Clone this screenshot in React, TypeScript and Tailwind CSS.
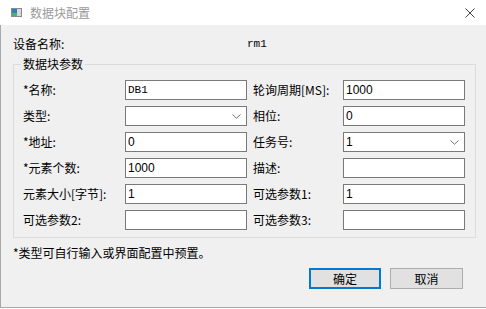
import React from "react";

const cjk = "font-['Noto_Sans_CJK_SC','Microsoft_YaHei',sans-serif]";

function Chevron() {
  return (
    <svg width="9" height="5" viewBox="0 0 9 5" className="shrink-0">
      <path d="M0.5 0.5 L4.5 4.2 L8.5 0.5" fill="none" stroke="#707070" strokeWidth="1" />
    </svg>
  );
}

function Field({ value, select, mono }: { value?: string; select?: boolean; mono?: boolean }) {
  return (
    <div className="w-[122px] h-[20px] bg-white border border-[#7a7a7a] flex items-center pl-[2px] pr-[5px]">
      <span
        className={
          mono
            ? "flex-1 font-['Liberation_Mono',monospace] text-[11px] leading-none"
            : "flex-1 font-['Liberation_Sans',Arial,sans-serif] text-[12px] leading-none"
        }
      >
        {value}
      </span>
      {select && <Chevron />}
    </div>
  );
}

type Cell = { label: string; value?: string; select?: boolean; mono?: boolean };

const rows: [Cell, Cell][] = [
  [
    { label: "*名称:", value: "DB1", mono: true },
    { label: "轮询周期[MS]:", value: "1000" },
  ],
  [
    { label: "类型:", select: true },
    { label: "相位:", value: "0" },
  ],
  [
    { label: "*地址:", value: "0" },
    { label: "任务号:", value: "1", select: true },
  ],
  [
    { label: "*元素个数:", value: "1000" },
    { label: "描述:" },
  ],
  [
    { label: "元素大小[字节]:", value: "1" },
    { label: "可选参数1:", value: "1" },
  ],
  [
    { label: "可选参数2:" },
    { label: "可选参数3:" },
  ],
];

export default function App() {
  return (
    <div className={`w-[486px] h-[309px] bg-white text-[12px] text-black ${cjk}`}>
      <div className="h-[25px] flex items-center pl-[11px]">
        <svg width="11" height="9" viewBox="0 0 11 9" className="shrink-0">
          <rect x="0.5" y="0.5" width="10" height="8" fill="#d8d8d8" stroke="#8a8a8a" />
          <rect x="1" y="1" width="5" height="7" fill="#2f7fb8" />
          <rect x="1" y="5" width="5" height="3" fill="#4caf7a" />
        </svg>
        <span className="ml-[8px] text-[#9a9a9a] leading-none">数据块配置</span>
        <svg width="10" height="10" viewBox="0 0 10 10" className="ml-auto mr-[11px]">
          <path d="M0.5 0.5 L9.5 9.5 M9.5 0.5 L0.5 9.5" stroke="#444" strokeWidth="1" />
        </svg>
      </div>

      <div className="h-[283px] bg-[#f0f0f0] border-l border-b border-[#a9a9a9] pl-[12px] pt-[11px]">
        <div className="flex h-[16px] items-center leading-[16px]">
          <span className="w-[234px]">设备名称:</span>
          <span className="font-['Liberation_Mono',monospace] text-[11px]">rm1</span>
        </div>

        <fieldset className="mt-[4px] w-[463px] border border-[#dcdcdc] pl-[7px]">
          <legend className="px-[2px] leading-[16px]">数据块参数</legend>
          <div className="pl-[2px] pt-[8px] pb-[7px] flex flex-col gap-[6px]">
            {rows.map(([a, b], i) => (
              <div key={i} className="flex items-center h-[20px]">
                <span className="w-[102px] whitespace-nowrap">{a.label}</span>
                <Field value={a.value} select={a.select} mono={a.mono} />
                <span className="ml-[6px] w-[90px] whitespace-nowrap">{b.label}</span>
                <Field value={b.value} select={b.select} mono={b.mono} />
              </div>
            ))}
          </div>
        </fieldset>

        <div className="mt-[7px] leading-[16px]">*类型可自行输入或界面配置中预置。</div>

        <div className="mt-[7px] flex">
          <button className="ml-[296px] w-[72px] h-[21px] border-2 border-[#0078d7] bg-[#e1e1e1] leading-none">
            确定
          </button>
          <button className="ml-[9px] w-[73px] h-[21px] border border-[#adadad] bg-[#e1e1e1] leading-none">
            取消
          </button>
        </div>
      </div>
    </div>
  );
}
